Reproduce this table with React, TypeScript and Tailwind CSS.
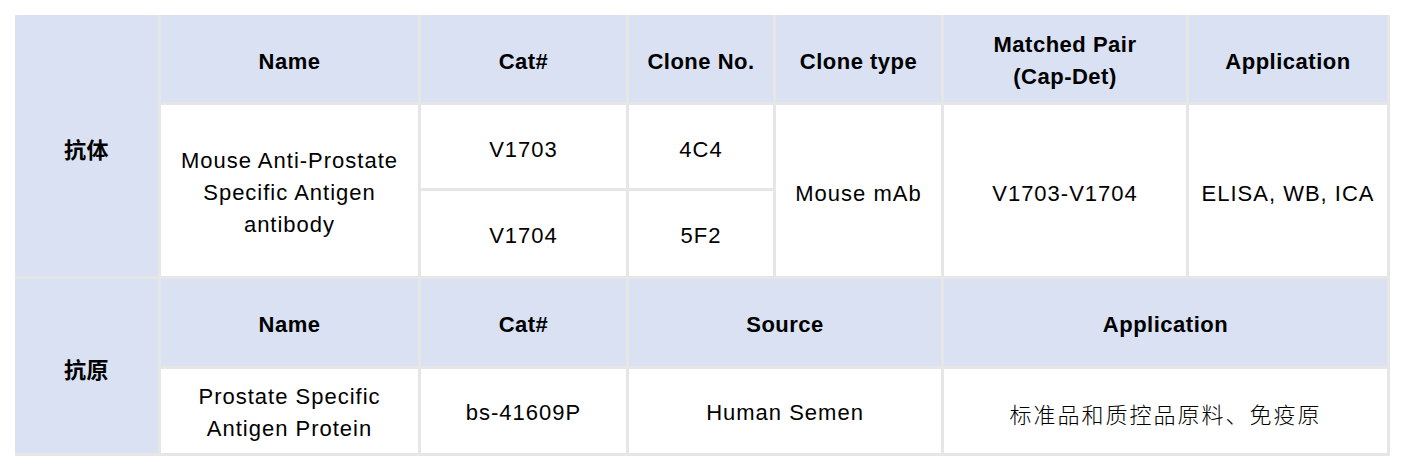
import React from 'react';

const head = 'bg-[#d9e1f2] flex items-center justify-center text-center font-bold tracking-[0.5px]';
const cell = 'bg-white flex items-center justify-center text-center tracking-[1px]';

export default function App() {
  return (
    <div className="bg-white w-[1406px] h-[472px] pl-[15px] pt-[15px] font-['Liberation_Sans','Noto_Sans_CJK_SC',sans-serif] text-[22px] leading-[32px] text-black">
      <div className="inline-grid bg-[#e6e6e6] pr-[3px] pb-[3px] gap-[3px] grid-cols-[143px_257px_205px_144px_165px_242px_198px] grid-rows-[87px_83px_85px_87px_84px]">
        {/* antibody block */}
        <div className={`${head} row-span-3 pt-[10px]`}>抗体</div>
        <div className={`${head} pt-[6px]`}>Name</div>
        <div className={`${head} pt-[6px]`}>Cat#</div>
        <div className={`${head} pt-[6px]`}>Clone No.</div>
        <div className={`${head} pt-[6px]`}>Clone type</div>
        <div className={`${head} pt-[4px]`}>
          Matched Pair
          <br />
          (Cap-Det)
        </div>
        <div className={`${head} pt-[6px]`}>Application</div>

        <div className={`${cell} row-span-2 pt-[4px]`}>
          Mouse Anti-Prostate
          <br />
          Specific Antigen
          <br />
          antibody
        </div>
        <div className={`${cell} pt-[6px]`}>V1703</div>
        <div className={`${cell} pt-[6px]`}>4C4</div>
        <div className={`${cell} row-span-2 pt-[6px]`}>Mouse mAb</div>
        <div className={`${cell} row-span-2 pt-[6px]`}>V1703-V1704</div>
        <div className={`${cell} row-span-2 pt-[6px]`}>ELISA, WB, ICA</div>
        <div className={`${cell} pt-[4px]`}>V1704</div>
        <div className={`${cell} pt-[4px]`}>5F2</div>

        {/* antigen block */}
        <div className={`${head} row-span-2 pt-[10px]`}>抗原</div>
        <div className={`${head} pt-[4px]`}>Name</div>
        <div className={`${head} pt-[4px]`}>Cat#</div>
        <div className={`${head} col-span-2 pt-[4px]`}>Source</div>
        <div className={`${head} col-span-2 pt-[4px]`}>Application</div>

        <div className={`${cell} pt-[4px]`}>
          Prostate Specific
          <br />
          Antigen Protein
        </div>
        <div className={`${cell} pt-[4px]`}>bs-41609P</div>
        <div className={`${cell} col-span-2 pt-[4px]`}>Human Semen</div>
        <div className={`${cell} col-span-2 pt-[4px] tracking-[2px] font-['Noto_Sans_CJK_SC',sans-serif] font-light`}>
          标准品和质控品原料、免疫原
        </div>
      </div>
    </div>
  );
}
